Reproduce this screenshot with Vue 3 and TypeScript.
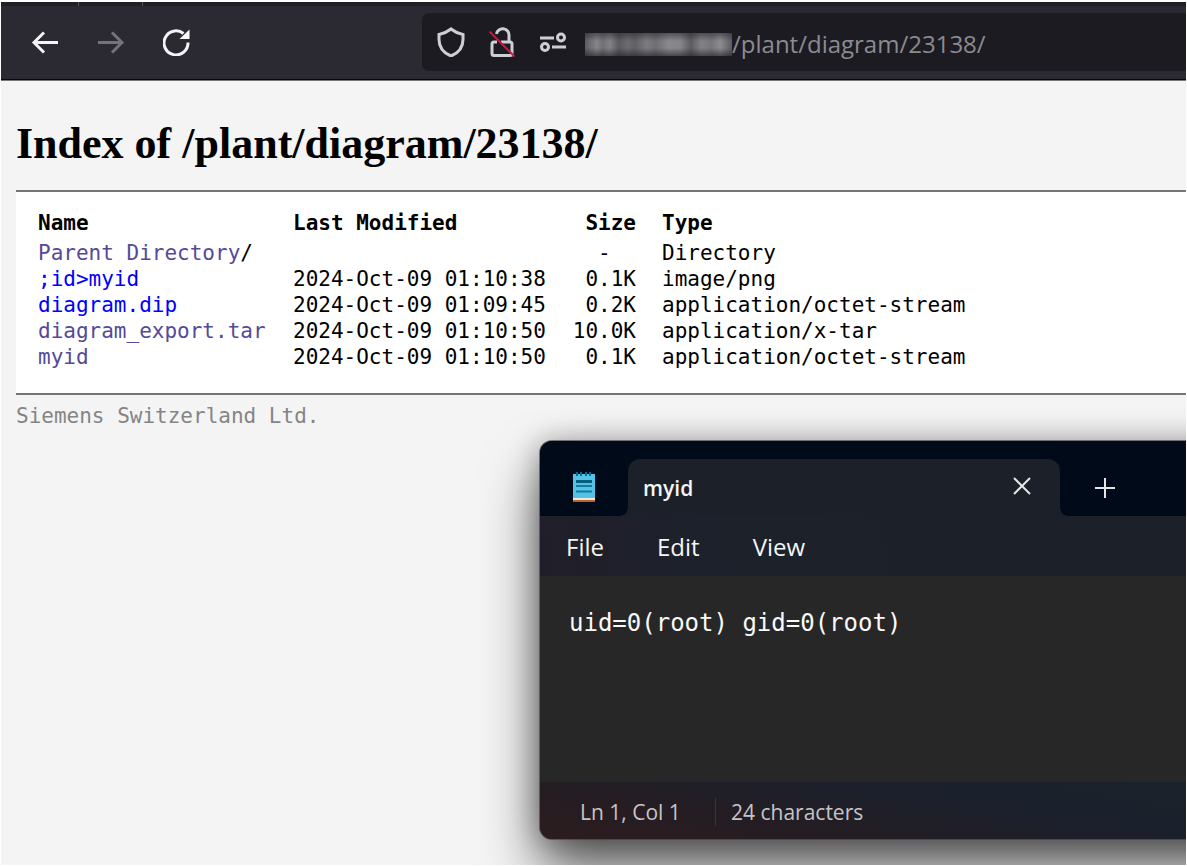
<script setup lang="ts">
import { ref } from 'vue'

interface Entry {
  name: string
  suffix?: string
  visited: boolean
  modified: string
  size: string
  type: string
}

const entries: Entry[] = [
  { name: 'Parent Directory', suffix: '/', visited: true, modified: '', size: '-\u00a0\u00a0', type: 'Directory' },
  { name: ';id>myid', visited: false, modified: '2024-Oct-09 01:10:38', size: '0.1K', type: 'image/png' },
  { name: 'diagram.dip', visited: false, modified: '2024-Oct-09 01:09:45', size: '0.2K', type: 'application/octet-stream' },
  { name: 'diagram_export.tar', visited: true, modified: '2024-Oct-09 01:10:50', size: '10.0K', type: 'application/x-tar' },
  { name: 'myid', visited: true, modified: '2024-Oct-09 01:10:50', size: '0.1K', type: 'application/octet-stream' },
]

const menus = ['File', 'Edit', 'View']
const address = ref('/plant/diagram/23138/')
const content = ref('uid=0(root) gid=0(root)')
</script>

<template>
  <div class="screen">
    <header class="toolbar">
      <div class="tabstrip"><i></i><i></i></div>
      <div class="bar">
        <nav class="nav">
          <button type="button" aria-label="Back">
            <svg width="28" height="28" viewBox="0 0 28 28"><path d="M27 14.500H3M13 4.500L3 14.500L13 24.500" /></svg>
          </button>
          <button type="button" aria-label="Forward" disabled>
            <svg width="28" height="28" viewBox="0 0 28 28"><path d="M1 14.500H25M15 4.500L25 14.500L15 24.500" /></svg>
          </button>
          <button type="button" aria-label="Reload">
            <svg width="28" height="28" viewBox="0 0 28 28"><path d="M25 14.500A12 12 0 1 1 20.500 5.500" /><path class="solid" d="M26.500 1.500V11H16.500Z" /></svg>
          </button>
        </nav>
        <div class="urlbar">
          <svg class="shield" width="28" height="30" viewBox="0 0 28 30"><path d="M14 2Q19 6 26 7.500V12.500Q26 24 14 29Q2 24 2 12.500V7.500Q9 6 14 2Z" /></svg>
          <svg class="lock" width="28" height="30" viewBox="0 0 28 30">
            <path d="M8.500 7A6.300 6.300 0 0 1 21 8.500V14" />
            <path d="M9 15H6Q4 15 4 17V26.500Q4 28.500 6 28.500H22Q24 28.500 24 26.500V17Q24 15 22 15H13" />
            <path class="slash" d="M1.500 4.500L26.500 29.500" />
          </svg>
          <svg class="perms" width="28" height="22" viewBox="0 0 28 22"><path d="M1 7H15M13 16H27" /><circle cx="22" cy="6.500" r="3.500" /><circle cx="6" cy="16" r="3.500" /></svg>
          <span class="redacted"></span>
          <input v-model="address" class="address" type="text" aria-label="Address" />
        </div>
      </div>
    </header>

    <main class="page">
      <h1>Index of /plant/diagram/23138/</h1>
      <div class="list">
        <table>
          <thead>
            <tr>
              <th class="name">Name</th>
              <th class="date">Last Modified</th>
              <th class="size">Size</th>
              <th class="type">Type</th>
            </tr>
          </thead>
          <tbody>
            <tr v-for="e in entries" :key="e.name">
              <td><a href="#" :class="{ visited: e.visited }">{{ e.name }}</a>{{ e.suffix }}</td>
              <td>{{ e.modified }}</td>
              <td class="size">{{ e.size }}</td>
              <td class="type">{{ e.type }}</td>
            </tr>
          </tbody>
        </table>
      </div>
      <footer>Siemens Switzerland Ltd.</footer>
    </main>

    <section class="notepad" aria-label="Notepad">
      <div class="titlebar">
        <svg class="app" width="24" height="32" viewBox="0 0 24 32">
          <rect x="1" y="27" width="22" height="4" fill="#b8622e" />
          <rect x="1" y="25" width="22" height="4" fill="#f2e6dc" />
          <rect x="1" y="3" width="22" height="24" fill="#55c3e6" />
          <path d="M5 1V5M9 1V5M14 1V5M18 1V5" stroke="#0b6b94" stroke-width="2" />
          <path d="M4 10.500H20" stroke="#08607f" stroke-width="3" />
          <path d="M4 15H20M4 20.500H20" stroke="#137a9e" stroke-width="2" />
        </svg>
        <div class="tab">
          <span>myid</span>
          <button type="button" aria-label="Close tab">
            <svg width="18" height="22" viewBox="0 0 18 22"><path d="M1 1L17 17M17 1L1 17" /></svg>
          </button>
        </div>
        <button class="add" type="button" aria-label="New tab">
          <svg width="20" height="20" viewBox="0 0 20 20"><path d="M10 0V20M0 10H20" /></svg>
        </button>
      </div>
      <div class="menubar">
        <button v-for="m in menus" :key="m" type="button">{{ m }}</button>
      </div>
      <textarea v-model="content" class="editor" aria-label="Text editor" spellcheck="false"></textarea>
      <div class="status">
        <span class="position">Ln 1, Col 1</span>
        <span class="count">24 characters</span>
      </div>
    </section>
  </div>
</template>

<style>
body {
  margin: 0;
  background: #fff;
}
</style>

<style scoped>
* {
  box-sizing: border-box;
}
.screen {
  position: relative;
  min-height: 100vh;
  overflow: hidden;
  display: flex;
  flex-direction: column;
  border: 1px solid #fff;
  border-top-width: 2px;
  background: #f4f4f4;
}
button {
  padding: 0;
  border: 0;
  background: none;
  color: inherit;
  font: inherit;
}
svg {
  display: block;
  flex: none;
  fill: none;
}
.toolbar {
  background: #2b2a33;
  border-bottom: 1px solid #77757a;
  box-shadow: inset 0 -1px #08080b;
}
.tabstrip {
  display: flex;
  gap: 63px;
  height: 4px;
  padding-left: 77px;
  background: #201f27;
}
.tabstrip i {
  width: 1px;
  background: #55545c;
}
.bar {
  display: flex;
  height: 74px;
  padding: 7px 0 9px;
}
.nav {
  display: flex;
  flex: none;
  align-items: center;
  gap: 38px;
  width: 421px;
  padding-left: 30px;
  stroke: #f4f4f7;
  stroke-width: 3;
}
.nav button:disabled {
  stroke: #74737a;
}
.nav .solid {
  fill: #fbfbfe;
  stroke: none;
}
.urlbar {
  display: flex;
  flex: 1;
  align-items: center;
  min-width: 0;
  padding-left: 15px;
  border-radius: 7px 0 0 7px;
  background: #1c1b22;
  stroke: #cfcfd3;
  stroke-width: 3;
}
.lock {
  margin-left: 23px;
}
.lock .slash {
  stroke: #d01540;
  stroke-width: 2;
}
.perms {
  margin-left: 23px;
}
.redacted {
  flex: none;
  width: 147px;
  height: 23px;
  margin: 4px 0 0 18px;
  background:
    linear-gradient(rgba(28, 27, 34, 0.5), transparent 35%, transparent 65%, rgba(28, 27, 34, 0.6)),
    linear-gradient(90deg, #5c5c60, #858588 8%, #717174 12%, #828285 17%, #5a5a5f 23%, #6c6c70 29%, #616165 34%, #7c7c80 42%, #6f6f72 48%, #8a8a8d 57%, #858588 65%, #5c5c60 72%, #828285 79%, #77777a 86%, #8c8c8f 92%, #5c5c60);
}
.address {
  flex: 1;
  min-width: 0;
  margin-top: 4px;
  padding: 0;
  border: 0;
  outline: 0;
  background: none;
  color: #8b8b90;
  font: 24px/32px "Open Sans", "Noto Sans", sans-serif;
}
.page {
  padding: 38px 0 0 15px;
  color: #000;
  font: 21px/26px "DejaVu Sans Mono", "Liberation Mono", monospace;
}
h1 {
  margin: 0 0 21px;
  font: bold 44px/50px "Liberation Serif", serif;
}
.list {
  padding: 18px 0 23px 22px;
  border-top: 2px solid #767676;
  border-bottom: 2px solid #767676;
  background: #fff;
}
table {
  border-collapse: collapse;
  white-space: nowrap;
}
th,
td {
  height: 26px;
  padding: 0;
  text-align: left;
}
th {
  height: 30px;
  padding-bottom: 4px;
}
.name,
.date {
  width: 255px;
}
th.size {
  width: 88px;
}
.size {
  text-align: right;
}
.type {
  padding-left: 26px;
}
a {
  color: #00f;
  text-decoration: none;
}
a.visited {
  color: #55499a;
}
footer {
  padding-top: 8px;
  color: #858585;
}
.notepad {
  position: absolute;
  top: 439px;
  left: 539px;
  right: -80px;
  display: flex;
  flex-direction: column;
  border-radius: 12px;
  background: #1c2129;
  color: #f5f5f5;
  font: 24px/32px "Open Sans", "Noto Sans", sans-serif;
  box-shadow:
    0 0 0 1px rgba(60, 60, 66, 0.6),
    0 32px 56px rgba(0, 0, 0, 0.6),
    0 2px 30px rgba(0, 0, 0, 0.35);
}
.titlebar {
  display: flex;
  height: 75px;
  padding-top: 18px;
  border-radius: 12px 0 0;
  background: #000a18;
}
.app {
  margin: 12px 32px 0;
}
.tab {
  position: relative;
  display: flex;
  align-items: center;
  justify-content: space-between;
  width: 432px;
  padding: 0 29px 0 15px;
  border-radius: 12px 12px 0 0;
  background: #1c2129;
  font-size: 21px;
  font-weight: 600;
}
.tab::before,
.tab::after {
  content: "";
  position: absolute;
  bottom: 0;
  width: 7px;
  height: 7px;
}
.tab::before {
  right: 100%;
  background: radial-gradient(circle at 0 0, transparent 6px, #1c2129 7px);
}
.tab::after {
  left: 100%;
  background: radial-gradient(circle at 100% 0, transparent 6px, #1c2129 7px);
}
.tab button,
.add {
  stroke: #e4e6e8;
  stroke-width: 2;
}
.add {
  margin-left: 35px;
}
.menubar {
  display: flex;
  align-items: center;
  gap: 53px;
  height: 60px;
  padding: 2px 0 0 26px;
  background: linear-gradient(80deg, #201e29, #1c212b 24%, #1c2129 50%);
}
.editor {
  height: 206px;
  padding: 31px 29px;
  border: 0;
  outline: 0;
  resize: none;
  background: #272727;
  color: #fafafa;
  font: 24px/32px "DejaVu Sans Mono", "Liberation Mono", monospace;
}
.status {
  display: flex;
  align-items: center;
  height: 57px;
  padding: 2px 0 0 40px;
  border-radius: 0 0 0 12px;
  background: linear-gradient(10deg, #2c1c1e, #241d23 30%, #1b202c 60%, #1a222a 90%);
  color: #c6c4c6;
  font-size: 21px;
  line-height: 28px;
}
.position {
  width: 136px;
  border-right: 1px solid #3a3439;
}
.count {
  margin-left: 15px;
}
</style>
